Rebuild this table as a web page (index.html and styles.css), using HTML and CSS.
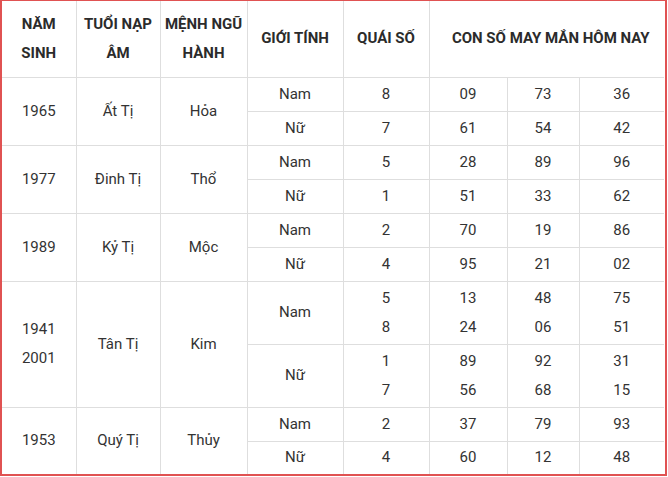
FILE: index.html
```html
<!DOCTYPE html>
<html lang="vi">
<head>
<meta charset="utf-8">
<title>Con số may mắn hôm nay</title>
<link rel="stylesheet" href="styles.css">
</head>
<body>
<div class="frame">
<table class="lucky">
  <colgroup>
    <col class="c1"><col class="c2"><col class="c3"><col class="c4"><col class="c5"><col class="c6"><col class="c7"><col class="c8">
  </colgroup>
  <thead>
    <tr class="r-head">
      <th>NĂM<br>SINH</th>
      <th>TUỔI NẠP<br>ÂM</th>
      <th>MỆNH NGŨ<br>HÀNH</th>
      <th>GIỚI TÍNH</th>
      <th>QUÁI SỐ</th>
      <th colspan="3" class="th-lucky">CON SỐ MAY MẮN HÔM NAY</th>
    </tr>
  </thead>
  <tbody>
    <tr class="r1">
      <td rowspan="2">1965</td><td rowspan="2">Ất Tị</td><td rowspan="2">Hỏa</td>
      <td>Nam</td><td>8</td><td>09</td><td>73</td><td>36</td>
    </tr>
    <tr class="r1">
      <td>Nữ</td><td>7</td><td>61</td><td>54</td><td>42</td>
    </tr>
    <tr class="r1">
      <td rowspan="2">1977</td><td rowspan="2">Đinh Tị</td><td rowspan="2">Thổ</td>
      <td>Nam</td><td>5</td><td>28</td><td>89</td><td>96</td>
    </tr>
    <tr class="r1">
      <td>Nữ</td><td>1</td><td>51</td><td>33</td><td>62</td>
    </tr>
    <tr class="r1">
      <td rowspan="2">1989</td><td rowspan="2">Kỷ Tị</td><td rowspan="2">Mộc</td>
      <td>Nam</td><td>2</td><td>70</td><td>19</td><td>86</td>
    </tr>
    <tr class="r1">
      <td>Nữ</td><td>4</td><td>95</td><td>21</td><td>02</td>
    </tr>
    <tr class="r2">
      <td rowspan="2">1941<br>2001</td><td rowspan="2">Tân Tị</td><td rowspan="2">Kim</td>
      <td>Nam</td><td>5<br>8</td><td>13<br>24</td><td>48<br>06</td><td>75<br>51</td>
    </tr>
    <tr class="r2">
      <td>Nữ</td><td>1<br>7</td><td>89<br>56</td><td>92<br>68</td><td>31<br>15</td>
    </tr>
    <tr class="r1">
      <td rowspan="2">1953</td><td rowspan="2">Quý Tị</td><td rowspan="2">Thủy</td>
      <td>Nam</td><td>2</td><td>37</td><td>79</td><td>93</td>
    </tr>
    <tr class="r-last">
      <td>Nữ</td><td>4</td><td>60</td><td>12</td><td>48</td>
    </tr>
  </tbody>
</table>
</div>
</body>
</html>
```
FILE: styles.css
```css
html, body {
  margin: 0;
  padding: 0;
  background: #ffffff;
}

.frame {
  box-sizing: border-box;
  width: 667px;
  height: 476px;
  border-style: solid;
  border-color: #e05252;
  border-width: 1px 2px 2px 2px;
  overflow: hidden;
}

.lucky {
  width: 662px;
  table-layout: fixed;
  border-collapse: collapse;
  border-style: hidden;
  font-family: Roboto, "Liberation Sans", Arial, sans-serif;
  font-size: 15px;
  line-height: 29px;
  color: #333333;
}

.c1 { width: 74px; }
.c2 { width: 84px; }
.c3 { width: 87px; }
.c4 { width: 96px; }
.c5 { width: 86px; }
.c6 { width: 78px; }
.c7 { width: 72px; }
.c8 { width: 85px; }

.lucky th,
.lucky td {
  border: 1px solid #dedede;
  padding: 0;
  text-align: center;
  vertical-align: middle;
}

.lucky th {
  font-weight: 700;
  color: #2b2b2b;
}

.lucky .th-lucky {
  padding-left: 8px;
}

.r-head { height: 76px; }
.r1 { height: 34px; }
.r2 { height: 63px; }
.r-last { height: 33px; }
```
